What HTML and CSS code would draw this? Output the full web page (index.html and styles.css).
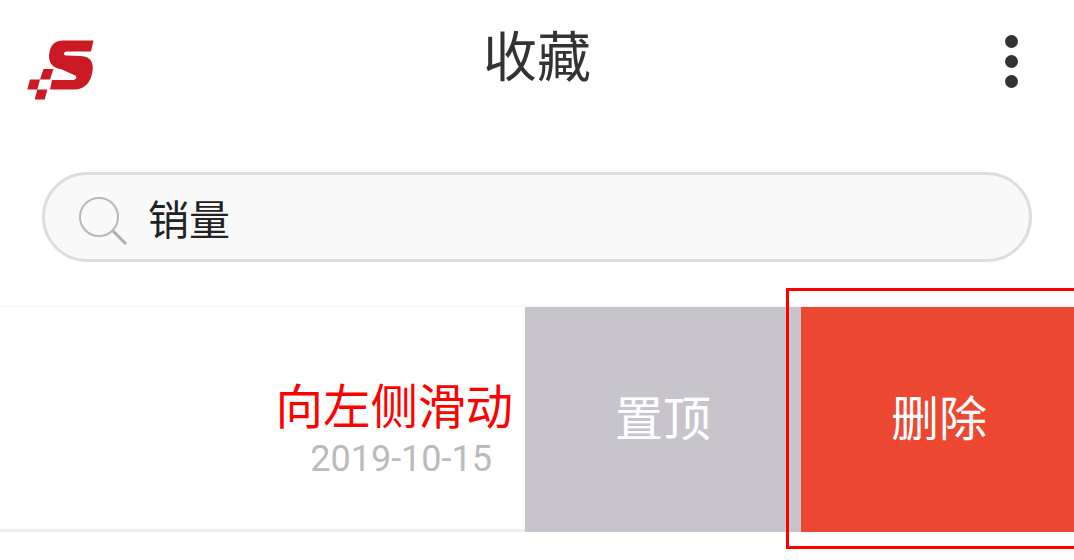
FILE: index.html
```html
<!DOCTYPE html>
<html lang="zh-CN">
<head>
    <meta charset="UTF-8">
    <meta name="viewport" content="width=device-width, initial-scale=1.0">
    <title>收藏</title>
    <link rel="stylesheet" href="styles.css">
</head>
<body>
    <header class="topBar">
        <svg class="logo" viewBox="26 38 70 64" width="70" height="64">
            <path fill="#cb1a22" d="M93.500 40.500L91 51.500H67C63.500 51.500 63 55 66 55.500L81 56C90 56.500 94 62 92.500 71C91 82 85 89.500 74 89.500H50L52 80H73C77 80 77.500 75.500 74 75L62 69.500C52 68 47.500 62 49.500 52C51 44 56 40.500 63 40.500Z"/>
            <path fill="#cb1a22" d="M43.500 69H53.500L50 79.500H40ZM30 79.500H40L37.300 89.500H27.300ZM37.300 89.500H47.300L44.700 99.500H34.700Z"/>
        </svg>
        <h1 class="title">收藏</h1>
        <div class="more"><span></span><span></span><span></span></div>
    </header>

    <div class="searchBox">
        <svg class="searchIcon" viewBox="0 0 50 50" width="50" height="50">
            <circle cx="21" cy="21" r="19" fill="none" stroke="#b8b8b8" stroke-width="2"/>
            <path d="M35 35L48 48" fill="none" stroke="#b0b0b0" stroke-width="3"/>
        </svg>
        <span class="searchText">销量</span>
    </div>

    <section class="row">
        <div class="rowMain">
            <div class="hint">向左侧滑动</div>
            <div class="date">2019-10-15</div>
        </div>
        <div class="btn btnTop">置顶</div>
        <div class="btn btnDel">删除</div>
        <div class="outline"></div>
    </section>
</body>
</html>
```

FILE: styles.css
```css
*{margin: 0; padding: 0; box-sizing: border-box;}
html,body{height: 100%; overflow: hidden;}
body{background-color: #fff; font-family: "Noto Sans CJK SC", "Noto Sans", sans-serif; color: #333;}

.topBar{height: 112px; display: grid; grid-template-columns: 1fr auto 1fr; align-items: center; padding: 0 56px;}
.logo{display: block; margin: 28px 0 0 -30px;}
.title{font-size: 54px; font-weight: 400; line-height: 1; color: #333; margin-top: -4px;}
.more{justify-self: end; display: flex; flex-direction: column; gap: 7px; margin-top: 10px;}
.more>span{width: 13px; height: 13px; border-radius: 50%; background-color: #333;}

.searchBox{height: 90px; margin: 60px 42px 45px; display: flex; align-items: center; padding-left: 33px; background-color: #f9f9f9; border: 3px solid #ddd; border-radius: 45px;}
.searchIcon{display: block; margin-top: 8px;}
.searchText{font-size: 41px; line-height: 1; color: #222; margin-left: 20px;}

.row{height: 225px; display: flex; position: relative; box-shadow: 0 -1px 3px rgba(0,0,0,.06);}
.rowMain{flex: 1; display: flex; flex-direction: column; align-items: flex-end; padding-top: 72px; border-bottom: 3px solid #eee;}
.hint{font-family: Roboto, "Noto Sans CJK SC", sans-serif; font-size: 47.5px; line-height: 58px; color: #f00; padding-right: 12px;}
.date{font-family: Roboto, sans-serif; font-size: 36px; line-height: 44px; color: #bbb; padding-right: 33px;}

.btn{display: flex; align-items: center; justify-content: center; font-size: 48px; color: #fff; padding-bottom: 10px;}
.btnTop{width: 276px; background-color: #c7c5cb;}
.btnDel{width: 273px; background-color: #ec4730; padding-left: 3px;}

.outline{position: absolute; top: -19px; bottom: -17px; right: 0; width: 288px; border: 3px solid #f00; border-right: none;}
```
